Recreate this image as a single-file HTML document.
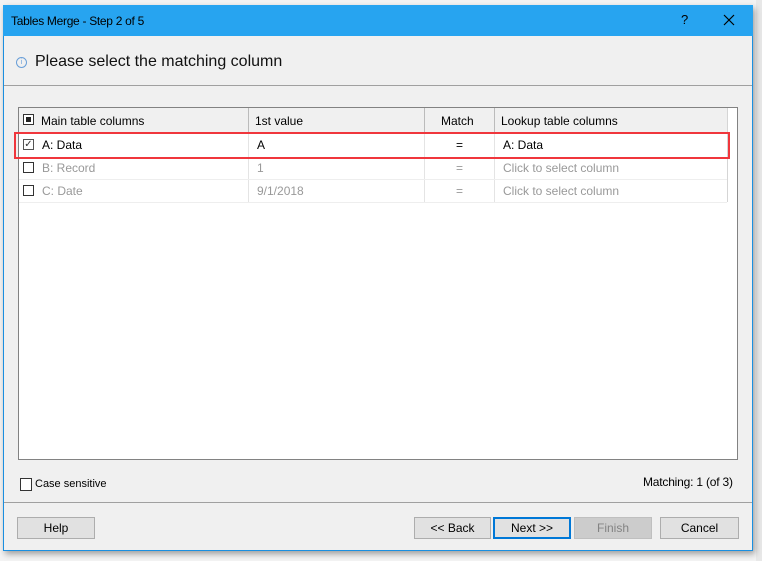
<!DOCTYPE html>
<html><head><style>
body{margin:0;width:762px;height:561px;background:#f3f3f3;position:relative;overflow:hidden;font-family:"Liberation Sans",sans-serif;font-size:12px;color:#000}
.a{position:absolute}
.dlg{left:3px;top:5px;width:750px;height:546px;background:#f0f0f0;border:1px solid #1a8fe0;box-sizing:border-box;box-shadow:2px 3px 6px rgba(0,0,0,.35)}
.title{left:3px;top:5px;width:750px;height:31px;background:#27a4f0}
.btn{height:22px;top:517px;background:#e1e1e1;border:1px solid #adadad;box-sizing:border-box;text-align:center;line-height:20px}
.cb{width:11px;height:11px;border:1px solid #333;background:#fff;box-sizing:border-box}
.g{color:#999}
.vl{width:1px;background:#e4e4e4}
</style></head><body>
<div class="a" style="left:756px;top:0;width:6px;height:561px;background:#e8e8e8"></div>
<div class="a dlg"></div>
<div class="a title"></div>
<div class="a" style="left:11px;top:14px;font-size:12px;letter-spacing:-0.3px">Tables Merge - Step 2 of 5</div>
<div class="a" style="left:681px;top:12px;font-size:13px">?</div>
<svg class="a" style="left:723px;top:14px" width="12" height="12"><path d="M1 1L11 11M11 1L1 11" stroke="#000" stroke-width="1.2"/></svg>
<div class="a" style="left:16px;top:57px;width:9px;height:9px;border:1px solid #6a9fd8;border-radius:50%;font-size:7px;color:#6a9fd8;text-align:center;line-height:9px">i</div>
<div class="a" style="left:35px;top:53px;font-size:16px;color:#111">Please select the matching column</div>
<div class="a" style="left:4px;top:85px;width:748px;height:1px;background:#a0a0a0"></div>
<div class="a" style="left:18px;top:107px;width:720px;height:353px;background:#fff;border:1px solid #828282;box-sizing:border-box"></div>
<div class="a" style="left:19px;top:108px;width:708px;height:24px;background:#f0f0f0;border-bottom:1px solid #d5d5d5"></div>
<div class="a" style="left:727px;top:108px;width:1px;height:94px;background:#d5d5d5"></div>
<div class="a" style="left:248px;top:108px;width:1px;height:24px;background:#bbb"></div>
<div class="a" style="left:424px;top:108px;width:1px;height:24px;background:#bbb"></div>
<div class="a" style="left:494px;top:108px;width:1px;height:24px;background:#bbb"></div>
<div class="a vl" style="left:248px;top:132px;height:70px"></div>
<div class="a vl" style="left:424px;top:132px;height:70px"></div>
<div class="a vl" style="left:494px;top:132px;height:70px"></div>
<div class="a" style="left:19px;top:179px;width:708px;height:1px;background:#eee"></div>
<div class="a" style="left:19px;top:202px;width:708px;height:1px;background:#eee"></div>
<div class="a cb" style="left:23px;top:114px"><div style="margin:2px;width:5px;height:5px;background:#222"></div></div>
<div class="a" style="left:41px;top:114px">Main table columns</div>
<div class="a" style="left:255px;top:114px">1st value</div>
<div class="a" style="left:441px;top:114px">Match</div>
<div class="a" style="left:501px;top:114px">Lookup table columns</div>
<div class="a cb" style="left:23px;top:139px;border-color:#555;font-size:10px;line-height:9px;text-align:center;color:#333">✓</div>
<div class="a" style="left:42px;top:138px">A: Data</div>
<div class="a" style="left:257px;top:138px">A</div>
<div class="a" style="left:456px;top:138px">=</div>
<div class="a" style="left:503px;top:138px">A: Data</div>
<div class="a cb" style="left:23px;top:162px"></div>
<div class="a g" style="left:42px;top:161px">B: Record</div>
<div class="a g" style="left:257px;top:161px">1</div>
<div class="a g" style="left:456px;top:161px">=</div>
<div class="a g" style="left:503px;top:161px">Click to select column</div>
<div class="a cb" style="left:23px;top:185px"></div>
<div class="a g" style="left:42px;top:184px">C: Date</div>
<div class="a g" style="left:257px;top:184px">9/1/2018</div>
<div class="a g" style="left:456px;top:184px">=</div>
<div class="a g" style="left:503px;top:184px">Click to select column</div>
<div class="a" style="left:14px;top:132px;width:716px;height:27px;border:2px solid #f0363c;box-sizing:border-box"></div>
<div class="a cb" style="left:20px;top:478px;width:12px;height:13px"></div>
<div class="a" style="left:35px;top:478px;font-size:11px">Case sensitive</div>
<div class="a" style="left:643px;top:475px;font-size:12px;letter-spacing:-0.2px">Matching: 1 (of 3)</div>
<div class="a" style="left:4px;top:502px;width:748px;height:1px;background:#a0a0a0"></div>
<div class="a btn" style="left:17px;width:78px">Help</div>
<div class="a btn" style="left:414px;width:77px">&lt;&lt; Back</div>
<div class="a btn" style="left:493px;width:78px;border:2px solid #0078d7;line-height:18px">Next &gt;&gt;</div>
<div class="a btn" style="left:574px;width:78px;background:#ccc;border-color:#bfbfbf;color:#838383">Finish</div>
<div class="a btn" style="left:660px;width:79px">Cancel</div>
</body></html>
